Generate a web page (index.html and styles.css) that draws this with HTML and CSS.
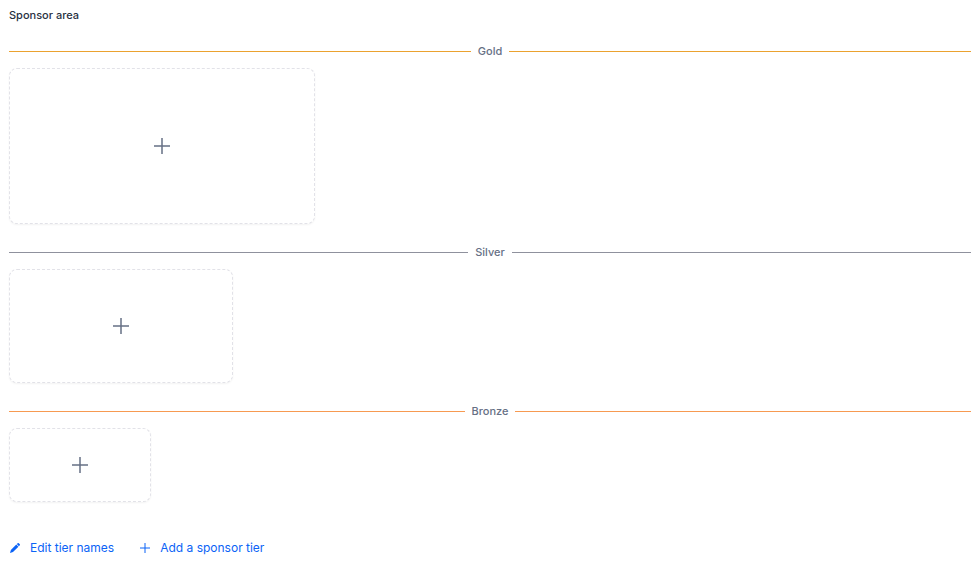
FILE: index.html
```
<!DOCTYPE html>
<html lang="en">
<head>
    <meta charset="UTF-8">
    <meta name="viewport" content="width=device-width, initial-scale=1.0">
    <title>Sponsor area</title>
    <link rel="stylesheet" href="styles.css">
</head>
<body>
    <main class="sponsor-area">
        <h2>Sponsor area</h2>

        <section class="tier gold">
            <h3 class="tier-name">Gold</h3>
            <button type="button" class="add-sponsor" aria-label="Add a gold sponsor">
                <svg class="plus" viewBox="0 0 18 18"><path d="M9 1v16M1 9h16"/></svg>
            </button>
        </section>

        <section class="tier silver">
            <h3 class="tier-name">Silver</h3>
            <button type="button" class="add-sponsor" aria-label="Add a silver sponsor">
                <svg class="plus" viewBox="0 0 18 18"><path d="M9 1v16M1 9h16"/></svg>
            </button>
        </section>

        <section class="tier bronze">
            <h3 class="tier-name">Bronze</h3>
            <button type="button" class="add-sponsor" aria-label="Add a bronze sponsor">
                <svg class="plus" viewBox="0 0 18 18"><path d="M9 1v16M1 9h16"/></svg>
            </button>
        </section>

        <div class="actions">
            <button type="button" class="action">
                <svg class="icon" viewBox="0 0 12 12"><path class="pencil" d="M1 11l.9-3 5.4-5.4 2.1 2.1L4 10.1zM7.8 2.1l.9-.9a.8.8 0 0 1 1.1 0l1 1a.8.8 0 0 1 0 1.1l-.9.9z"/></svg>
                Edit tier names
            </button>
            <button type="button" class="action">
                <svg class="icon" viewBox="0 0 12 12"><path class="cross" d="M6 1v10M1 6h10"/></svg>
                Add a sponsor tier
            </button>
        </div>
    </main>
</body>
</html>
```
FILE: styles.css
```
body {
    margin: 0;
    background-color: #fff;
    color: #27303f;
    font-family: Inter, "Liberation Sans", sans-serif;
}
.sponsor-area {
    padding: 8px 7px 8px 9px;
}
h2 {
    margin: 0 0 20px;
    font-size: 11px;
    font-weight: 500;
    line-height: 15px;
}
.tier {
    margin-bottom: 20px;
}
.tier-name {
    display: flex;
    align-items: center;
    gap: 7px;
    margin: 0 0 9px;
    color: #667085;
    font-size: 11px;
    font-weight: 500;
    line-height: 16px;
}
.tier-name::before,
.tier-name::after {
    content: "";
    flex: 1;
    border-top: 1px solid #8f919d;
}
.gold .tier-name::before,
.gold .tier-name::after {
    border-color: #eba22f;
}
.bronze .tier-name::before,
.bronze .tier-name::after {
    border-color: #f79a51;
}
.add-sponsor {
    display: flex;
    align-items: center;
    justify-content: center;
    box-sizing: border-box;
    width: 306px;
    max-width: 100%;
    height: 156px;
    padding: 0;
    border: 1px dashed #e2e2e8;
    border-radius: 8px;
    background-color: #fff;
    box-shadow: 0 1px 2px rgba(0, 0, 0, 0.05);
    cursor: pointer;
}
.silver .add-sponsor {
    width: 224px;
    height: 114px;
}
.bronze .add-sponsor {
    width: 142px;
    height: 74px;
}
.add-sponsor:hover {
    background-color: #f9fafb;
}
.plus {
    width: 18px;
    height: 18px;
    fill: none;
    stroke: #667085;
    stroke-width: 1.5;
}
.actions {
    display: flex;
    flex-wrap: wrap;
    gap: 25px;
    margin-top: 37px;
}
.action {
    display: flex;
    align-items: center;
    gap: 9px;
    padding: 0;
    border: none;
    background: none;
    color: #0b63f6;
    font-family: inherit;
    font-size: 12px;
    line-height: 18px;
    cursor: pointer;
}
.icon {
    width: 12px;
    height: 12px;
}
.pencil {
    fill: #0b63f6;
}
.cross {
    fill: none;
    stroke: #0b63f6;
}
```
